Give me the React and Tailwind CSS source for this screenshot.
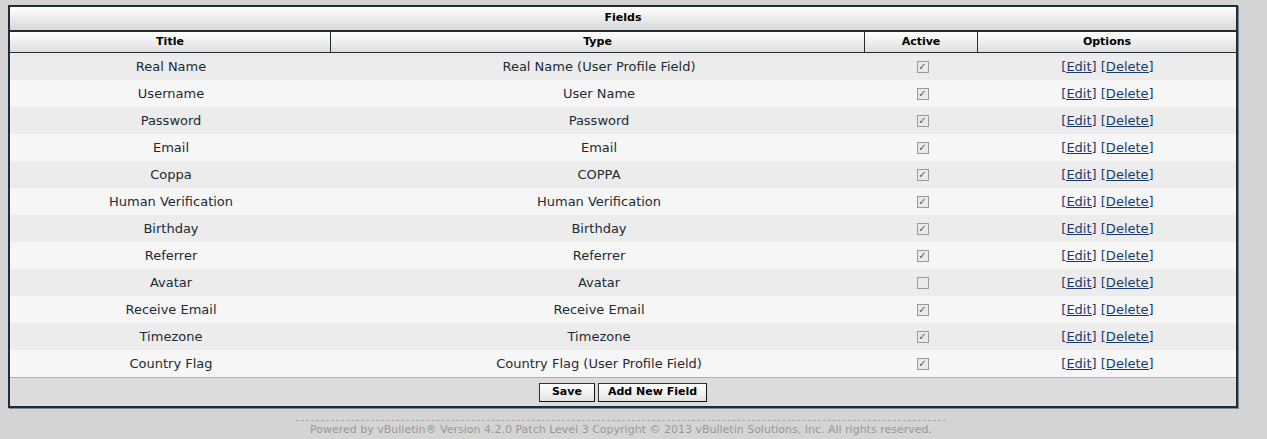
export default function App() {
  const rows = [
    ["Real Name", "Real Name (User Profile Field)", true],
    ["Username", "User Name", true],
    ["Password", "Password", true],
    ["Email", "Email", true],
    ["Coppa", "COPPA", true],
    ["Human Verification", "Human Verification", true],
    ["Birthday", "Birthday", true],
    ["Referrer", "Referrer", true],
    ["Avatar", "Avatar", false],
    ["Receive Email", "Receive Email", true],
    ["Timezone", "Timezone", true],
    ["Country Flag", "Country Flag (User Profile Field)", true],
  ];
  const font = { fontFamily: '"DejaVu Sans", Verdana, sans-serif' };
  return (
    <div className="w-[1267px] h-[439px] bg-[#d4d4d4] pt-[5px] pl-[8px]" style={font}>
      <div className="w-[1230px] border-[2px] border-[#1f2d36] bg-[#dcdcdc] shadow-[1px_1px_0_#7a8a94]">
        <div className="h-[25px] border-b-[2px] border-[#1f2d36] bg-gradient-to-b from-white to-[#d8d8d8] flex items-center justify-center text-[11px] font-bold text-black">Fields</div>
        <div className="flex h-[21px] border-b border-[#1f2d36] bg-gradient-to-b from-white to-[#dedede] text-[11px] font-bold text-black">
          <div className="w-[321px] flex items-center justify-center border-r border-[#1f2d36]">Title</div>
          <div className="w-[534px] flex items-center justify-center border-r border-[#1f2d36]">Type</div>
          <div className="w-[113px] flex items-center justify-center border-r border-[#1f2d36]">Active</div>
          <div className="flex-1 flex items-center justify-center">Options</div>
        </div>
        {rows.map((r, i) => (
          <div key={i} className={`flex h-[27px] items-center text-[13px] text-[#1c2a35] ${i % 2 === 0 ? "bg-[#ececec]" : "bg-[#f6f6f6]"}`}>
            <div className="w-[322px] text-center">{r[0]}</div>
            <div className="w-[534px] text-center">{r[1]}</div>
            <div className="w-[113px] flex justify-center">
              <div className="w-[12px] h-[12px] border border-[#9a9a9a] bg-[#eaeaea] flex items-center justify-center text-[10px] leading-none text-[#4a5a70]">{r[2] ? "✓" : ""}</div>
            </div>
            <div className="flex-1 text-center text-[#1a3a6e]">
              <span className="underline">[Edit]</span> <span className="underline">[Delete]</span>
            </div>
          </div>
        ))}
        <div className="h-[29px] border-t border-[#b0b0b0] bg-[#dcdcdc] flex items-center justify-center gap-[3px]">
          <button className="h-[19px] px-[12px] text-[11px] font-bold bg-gradient-to-b from-white to-[#e4e4e4] border border-[#333] border-b-[#111] border-r-[#111]">Save</button>
          <button className="h-[19px] px-[9px] text-[11px] font-bold bg-gradient-to-b from-white to-[#e4e4e4] border border-[#333] border-b-[#111] border-r-[#111]">Add New Field</button>
        </div>
      </div>
      <div className="w-[650px] ml-[288px] mt-[12px] border-t border-dashed border-[#a8a8a8] pt-[1px] text-[11px] text-[#999] text-center">
        Powered by vBulletin® Version 4.2.0 Patch Level 3 Copyright © 2013 vBulletin Solutions, Inc. All rights reserved.
      </div>
    </div>
  );
}
